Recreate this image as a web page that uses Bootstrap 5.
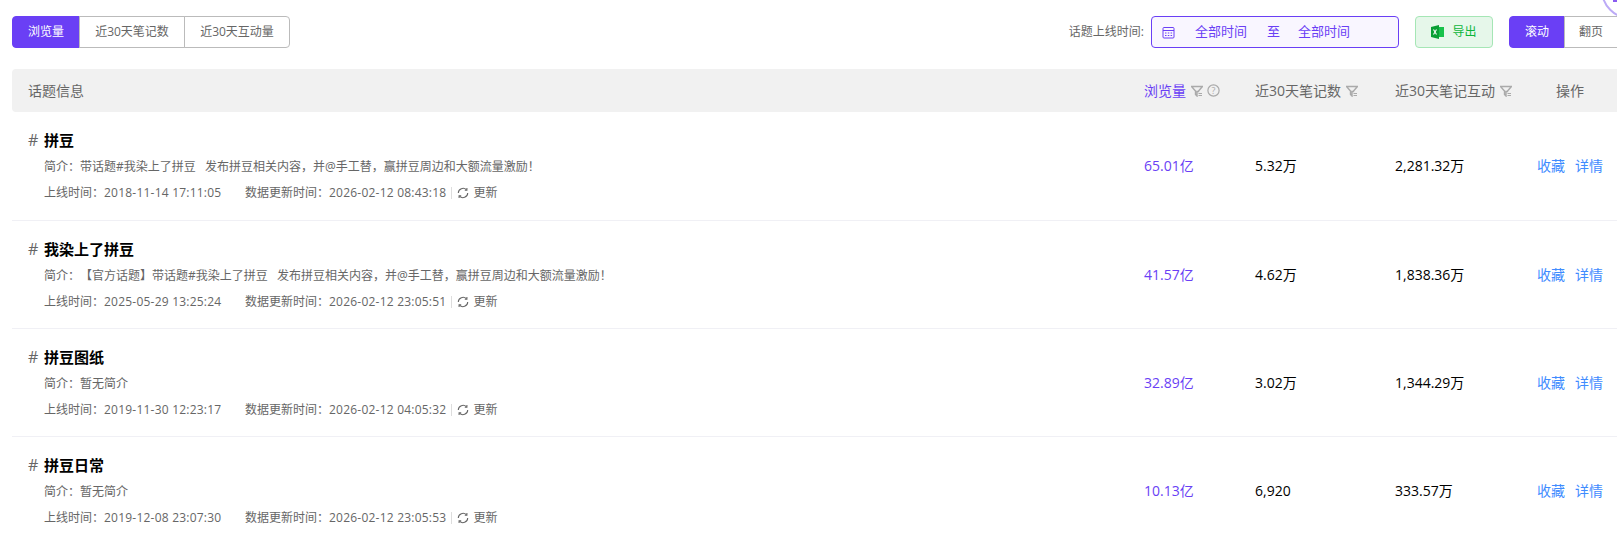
<!DOCTYPE html>
<html lang="zh-CN">
<head>
  <meta charset="UTF-8">
  <title>话题榜</title>
  <link href="https://cdn.jsdelivr.net/npm/bootstrap@5.3.3/dist/css/bootstrap.min.css" rel="stylesheet">
  <style>
    body {
      font-family: "Open Sans", "Noto Sans CJK SC", sans-serif;
      font-size: 12px;
      color: #666;
      background: #fff;
      overflow: hidden;
      text-spacing-trim: space-all;
    }

    .page-wrap { padding: 16px 0 0 12px; width: 1617px; position: relative; }

    /* toolbar */
    .tool-bar { height: 32px; margin-bottom: 21px; }
    .seg-group .btn {
      font-size: 12px;
      height: 32px;
      padding: 0;
      color: #666;
      background: #fff;
      border-color: #bbb;
      line-height: 30px;
      --bs-btn-border-radius: 4px;
    }
    .seg-group .btn.on { background: #6a3ff5; border-color: #6a3ff5; color: #fff; }
    .tab-a { width: 68px; }
    .tab-b { width: 106px; }
    .tab-c { width: 106px; }
    .tab-d { width: 56px; }
    .tab-e { width: 53px; border-right: 0 !important; border-radius: 0 !important; }

    .date-label { margin-right: 7px; color: #666; }
    .date-box {
      width: 248px;
      height: 32px;
      border: 1px solid #6a3ff5;
      border-radius: 4px;
      background: #f9f6ff;
      color: #6a3ff5;
      font-size: 13px;
      padding-left: 10px;
    }
    .date-box .date-text { margin-left: 20px; }
    .date-box .date-sep { margin-left: 20px; margin-right: -2px; }
    .export-btn {
      width: 78px;
      height: 32px;
      margin-left: 16px;
      margin-right: 16px;
      border: 1px solid #a5e6b5;
      border-radius: 4px;
      background: #e6f7ea;
      color: #0cb53a;
    }

    /* table */
    .topic-table { table-layout: fixed; width: 1605px; margin: 0; }
    .topic-table th, .topic-table td { padding: 0; border-color: #f0f0f5; vertical-align: middle; }
    .topic-table thead th {
      height: 43px;
      background: #f1f1f1;
      border: 0;
      font-weight: 400;
      font-size: 14px;
      color: #666;
    }
    .topic-table thead th:first-child { padding-left: 16px; border-radius: 4px 0 0 4px; }
    .topic-table tbody td { height: 108px; font-size: 14px; color: #000; }
    .col-views { width: 111px; }
    .col-notes { width: 140px; }
    .col-inter { width: 142px; }
    .col-ops { width: 80px; }
    .purple-text { color: #6a3ff5 !important; }
    .ops-head { padding-left: 19px !important; }
    .head-icon { margin-left: 1px; vertical-align: -1px; }

    .topic-cell { padding: 1px 0 0 16px !important; }
    .topic-name { font-size: 15px; font-weight: 700; color: #000; line-height: 20px; }
    .topic-hash { width: 16px; color: #666; font-weight: 400; font-size: 16px; }
    .topic-line { margin-left: 16px; font-size: 12px; color: #666; line-height: 18px; margin-top: 8px; }
    .meta-on { width: 201px; }
    .date-num { letter-spacing: .22px; }
    .meta-sep { width: 1px; height: 12px; background: #ddd; margin: 0 5px; }
    .op-link { color: #3f8cff; text-decoration: none; margin-right: 10px; }

    .corner-badge { position: absolute; top: 0; left: 1597px; }
  </style>
</head>
<body>

<div class="page-wrap">
  <!-- circle sticking in from the top right -->
  <svg class="corner-badge" width="20" height="18" viewBox="0 0 20 18"><circle cx="33" cy="-10" r="28" fill="#fff" stroke="#bcaaf6" stroke-width="2"/><rect x="16" y="0" width="4" height="2" fill="#8a5cf0"/></svg>

  <div class="tool-bar d-flex align-items-center">
    <div class="btn-group seg-group">
      <button class="btn tab-a on">浏览量</button>
      <button class="btn tab-b">近30天笔记数</button>
      <button class="btn tab-c">近30天互动量</button>
    </div>
    <div class="d-flex align-items-center ms-auto">
      <span class="date-label">话题上线时间:</span>
      <div class="date-box d-flex align-items-center">
        <svg width="13" height="13" viewBox="0 0 13 13" fill="none" stroke="#6a3ff5"><rect x="1" y="1.5" width="11" height="10.5" rx="1"/><path d="M1 4.5h11M3 7h1.5M5.8 7h1.5M8.6 7h1.5M3 9.5h1.5M5.8 9.5h1.5M8.6 9.5h1.5"/></svg>
        <span class="date-text">全部时间</span>
        <span class="date-sep">至</span>
        <span class="date-text">全部时间</span>
      </div>
      <div class="export-btn d-flex align-items-center justify-content-center gap-2">
        <svg width="13" height="14" viewBox="0 0 13 14"><path d="M0 2l8-2v14l-8-2z" fill="#0a9f35"/><rect x="8" y="2" width="5" height="10" fill="#17c24a"/><path d="M2.5 4.5l3 5M5.5 4.5l-3 5" stroke="#fff" stroke-width="1.1"/></svg>
        <span>导出</span>
      </div>
      <div class="btn-group seg-group">
        <button class="btn tab-d on">滚动</button>
        <button class="btn tab-e">翻页</button>
      </div>
    </div>
  </div>

  <table class="table topic-table">
    <thead>
      <tr>
        <th>话题信息</th>
        <th class="col-views purple-text">浏览量 <svg class="head-icon" width="12" height="12" viewBox="0 0 12 12"><path d="M.5 1.5h11L7.5 6v.5H6V11L4.5 9.5V6z" fill="none" stroke="#aaa" stroke-width="1.4"/><path d="M7.5 8.5H11M7.5 10.5H11" stroke="#aaa" stroke-width="1.2"/></svg> <svg class="head-icon" width="13" height="13" viewBox="0 0 13 13"><circle cx="6.5" cy="6.5" r="5.6" fill="none" stroke="#aaa" stroke-width="1.2"/><text x="6.5" y="9.6" font-size="9" text-anchor="middle" fill="#aaa">?</text></svg></th>
        <th class="col-notes">近30天笔记数 <svg class="head-icon" width="12" height="12" viewBox="0 0 12 12"><path d="M.5 1.5h11L7.5 6v.5H6V11L4.5 9.5V6z" fill="none" stroke="#aaa" stroke-width="1.4"/><path d="M7.5 8.5H11M7.5 10.5H11" stroke="#aaa" stroke-width="1.2"/></svg></th>
        <th class="col-inter">近30天笔记互动 <svg class="head-icon" width="12" height="12" viewBox="0 0 12 12"><path d="M.5 1.5h11L7.5 6v.5H6V11L4.5 9.5V6z" fill="none" stroke="#aaa" stroke-width="1.4"/><path d="M7.5 8.5H11M7.5 10.5H11" stroke="#aaa" stroke-width="1.2"/></svg></th>
        <th class="col-ops ops-head">操作</th>
      </tr>
    </thead>
    <tbody id="rows"></tbody>
  </table>
</div>

<script src="https://cdn.jsdelivr.net/npm/bootstrap@5.3.3/dist/js/bootstrap.bundle.min.js"></script>
<script>
const topics = [
  { name: '拼豆', intro: '带话题#我染上了拼豆&nbsp;&nbsp; 发布拼豆相关内容，并@手工替，赢拼豆周边和大额流量激励！', online: '2018-11-14 17:11:05', updated: '2026-02-12 08:43:18', views: '65.01亿', notes: '5.32万', inter: '2,281.32万' },
  { name: '我染上了拼豆', intro: '【官方话题】带话题#我染上了拼豆&nbsp;&nbsp; 发布拼豆相关内容，并@手工替，赢拼豆周边和大额流量激励！', online: '2025-05-29 13:25:24', updated: '2026-02-12 23:05:51', views: '41.57亿', notes: '4.62万', inter: '1,838.36万' },
  { name: '拼豆图纸', intro: '暂无简介', online: '2019-11-30 12:23:17', updated: '2026-02-12 04:05:32', views: '32.89亿', notes: '3.02万', inter: '1,344.29万' },
  { name: '拼豆日常', intro: '暂无简介', online: '2019-12-08 23:07:30', updated: '2026-02-12 23:05:53', views: '10.13亿', notes: '6,920', inter: '333.57万' }
];

document.getElementById('rows').innerHTML = topics.map(t => `
  <tr>
    <td class="topic-cell">
      <div class="topic-name d-flex"><span class="topic-hash">#</span>${t.name}</div>
      <div class="topic-line">简介：${t.intro}</div>
      <div class="topic-line d-flex align-items-center">
        <span class="meta-on">上线时间：<span class="date-num">${t.online}</span></span>
        <span>数据更新时间：<span class="date-num">${t.updated}</span></span>
        <span class="meta-sep"></span>
        <svg class="me-1" width="12" height="12" viewBox="0 0 12 12" fill="none" stroke="#666" stroke-width="1.1"><path d="M1.3 6a4.7 4.7 0 0 1 8.2-3.1M10.7 6a4.7 4.7 0 0 1-8.2 3.1"/><path d="M9.9 1v2.2H7.8M2.1 11V8.8h2.1"/></svg>
        <span>更新</span>
      </div>
    </td>
    <td class="purple-text">${t.views}</td>
    <td>${t.notes}</td>
    <td>${t.inter}</td>
    <td><a class="op-link" href="#">收藏</a><a class="op-link" href="#">详情</a></td>
  </tr>`).join('');
</script>

</body>
</html>
